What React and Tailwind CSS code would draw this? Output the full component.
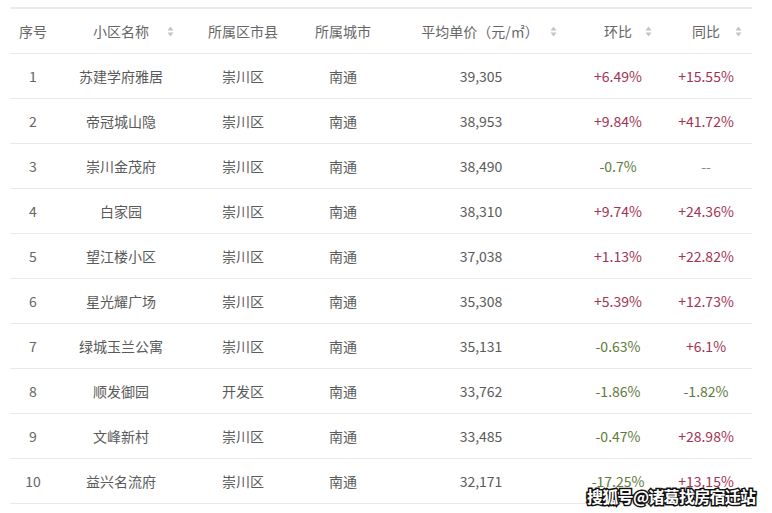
const rows = [
  ["1", "苏建学府雅居", "崇川区", "南通", "39,305", "+6.49%", "+15.55%"],
  ["2", "帝冠城山隐", "崇川区", "南通", "38,953", "+9.84%", "+41.72%"],
  ["3", "崇川金茂府", "崇川区", "南通", "38,490", "-0.7%", "--"],
  ["4", "白家园", "崇川区", "南通", "38,310", "+9.74%", "+24.36%"],
  ["5", "望江楼小区", "崇川区", "南通", "37,038", "+1.13%", "+22.82%"],
  ["6", "星光耀广场", "崇川区", "南通", "35,308", "+5.39%", "+12.73%"],
  ["7", "绿城玉兰公寓", "崇川区", "南通", "35,131", "-0.63%", "+6.1%"],
  ["8", "顺发御园", "开发区", "南通", "33,762", "-1.86%", "-1.82%"],
  ["9", "文峰新村", "崇川区", "南通", "33,485", "-0.47%", "+28.98%"],
  ["10", "益兴名流府", "崇川区", "南通", "32,171", "-17.25%", "+13.15%"],
];

function SortIcon() {
  return (
    <svg width="7" height="11" viewBox="0 0 7 11">
      <path d="M3.5 0.5 L6.5 4.5 L0.5 4.5 Z" fill="#c4c4c4" />
      <path d="M3.5 10.5 L6.5 6.5 L0.5 6.5 Z" fill="#c4c4c4" />
    </svg>
  );
}

function pctColor(v) {
  if (v.startsWith("+")) return "text-[#a23352]";
  if (v.startsWith("-") && v !== "--") return "text-[#5e7a3a]";
  return "text-[#888]";
}

const widths = ["w-[46px]", "w-[130px]", "w-[114px]", "w-[86px]", "w-[190px]", "w-[84px]", "w-[92px]"];

function App() {
  return (
    <div className="relative w-[772px] h-[513px] bg-white overflow-hidden font-['Noto_Sans_CJK_SC','Noto_Sans',sans-serif] text-[14px]">
      <div className="pt-[7px] pl-[10px]">
        <div className="w-[742px] border-t-2 border-[#ebebeb]">
          <div className="flex h-[45px] items-center border-b border-[#e9e9e9] text-[#666]">
            <div className={`${widths[0]} text-center`}>序号</div>
            <div className={`${widths[1]} relative text-center`}>
              小区名称
              <span className="absolute right-[12px] top-[5px]"><SortIcon /></span>
            </div>
            <div className={`${widths[2]} text-center`}>所属区市县</div>
            <div className={`${widths[3]} text-center`}>所属城市</div>
            <div className={`${widths[4]} relative text-center pr-[2px]`}>
              平均单价（元/㎡）
              <span className="absolute right-[19px] top-[5px]"><SortIcon /></span>
            </div>
            <div className={`${widths[5]} relative text-center`}>
              环比
              <span className="absolute right-[8px] top-[5px]"><SortIcon /></span>
            </div>
            <div className={`${widths[6]} relative text-center`}>
              同比
              <span className="absolute right-[10px] top-[5px]"><SortIcon /></span>
            </div>
          </div>
          {rows.map((r) => (
            <div key={r[0]} className="flex h-[45px] items-center border-b border-[#e9e9e9] text-[#5a5a5a]">
              <div className={`${widths[0]} text-center text-[#666]`}>{r[0]}</div>
              <div className={`${widths[1]} text-center`}>{r[1]}</div>
              <div className={`${widths[2]} text-center`}>{r[2]}</div>
              <div className={`${widths[3]} text-center`}>{r[3]}</div>
              <div className={`${widths[4]} text-center`}>{r[4]}</div>
              <div className={`${widths[5]} text-center ${pctColor(r[5])}`}>{r[5]}</div>
              <div className={`${widths[6]} text-center ${pctColor(r[6])}`}>{r[6]}</div>
            </div>
          ))}
        </div>
      </div>
      {/* watermark over the table */}
      <div className="absolute left-[587px] top-[484px] text-[16px] font-bold text-white tracking-[-0.7px] [-webkit-text-stroke:3px_#111] [paint-order:stroke_fill]">
        搜狐号@诸葛找房宿迁站
      </div>
    </div>
  );
}

export default App;
